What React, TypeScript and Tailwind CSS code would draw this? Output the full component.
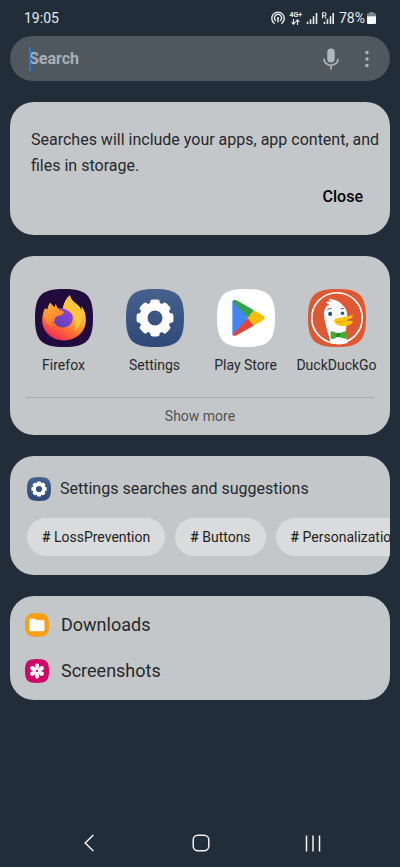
import type { ReactNode } from "react";

const apps = [
  { name: "Firefox", icon: <FirefoxIcon /> },
  { name: "Settings", icon: <SettingsIcon /> },
  { name: "Play Store", icon: <PlayStoreIcon /> },
  { name: "DuckDuckGo", icon: <DuckIcon /> },
];

const tags = ["LossPrevention", "Buttons", "Personalization"];

const folders = [
  { name: "Downloads", icon: <FolderIcon /> },
  { name: "Screenshots", icon: <GalleryIcon /> },
];

const cogAngles = [0, 45, 90, 135, 180, 225, 270, 315];
const petalAngles = [0, 60, 120, 180, 240, 300];

function Squircle({ fill, children }: { fill: string; children: ReactNode }) {
  return (
    <svg className="block h-full w-full" viewBox="0 0 170 170" aria-hidden="true">
      <path
        fill={fill}
        d="M0 85C0 19 19 0 85 0s85 19 85 85-19 85-85 85S0 151 0 85Z"
      />
      {children}
    </svg>
  );
}

function FirefoxIcon() {
  return (
    <Squircle fill="#210c3d">
      <defs>
        <linearGradient id="ffBody" x1="0.85" y1="0.1" x2="0.35" y2="1">
          <stop offset="0" stopColor="#ffdf4a" />
          <stop offset="0.4" stopColor="#ffb02e" />
          <stop offset="0.7" stopColor="#ff6f33" />
          <stop offset="1" stopColor="#f32a58" />
        </linearGradient>
        <linearGradient id="ffGlobe" x1="0.8" y1="0" x2="0.3" y2="1">
          <stop offset="0" stopColor="#9a45d8" />
          <stop offset="1" stopColor="#5a41bb" />
        </linearGradient>
        <linearGradient id="ffHead" x1="0.2" y1="0" x2="0.5" y2="1">
          <stop offset="0" stopColor="#ffb12e" />
          <stop offset="1" stopColor="#ff7434" />
        </linearGradient>
      </defs>
      <path
        fill="url(#ffBody)"
        d="M102 18C91 28 84 41 82 57L62 60 45 40C40 46 37 54 37 60L29 57C23 68 21 79 21 91c0 34 28 60 64 60s64-26 64-60c0-17-5-31-13-41 1 5 1 9 0 12C131 43 108 41 102 18Z"
      />
      <circle cx="82" cy="84" r="29" fill="url(#ffGlobe)" />
      <path
        fill="url(#ffHead)"
        d="M29 57l8 4c0-8 3-15 8-21 3 8 6 12 12 13l4-10c2 9 8 17 18 21 5 2 6 5 4 8-3 5-12 6-18 8-6 3-8 7-7 12-7 4-9 12-4 19-22-3-34-27-25-54Z"
      />
      <path
        fill="#ffc53a"
        d="M102 18c4 25 33 32 35 62 1 21-9 36-24 42 7-11 8-28 1-41-6-11-17-20-32-24 2-16 9-29 20-39Z"
      />
    </Squircle>
  );
}

function SettingsIcon() {
  return (
    <Squircle fill="url(#cogBg)">
      <defs>
        <linearGradient id="cogBg" x1="0" y1="0" x2="0" y2="1">
          <stop offset="0" stopColor="#46618c" />
          <stop offset="1" stopColor="#2f4a7a" />
        </linearGradient>
      </defs>
      <g fill="#fff">
        {cogAngles.map((a) => (
          <rect key={a} x="71" y="31" width="28" height="30" rx="7" transform={`rotate(${a} 85 85)`} />
        ))}
      </g>
      <circle cx="85" cy="85" r="34" fill="none" stroke="#fff" strokeWidth="24" />
    </Squircle>
  );
}

function PlayStoreIcon() {
  return (
    <Squircle fill="#fff">
      <path fill="#4285f4" d="M45 38v94c0 3 2 5 4 5l42-52-42-52c-2 0-4 2-4 5Z" />
      <path fill="#34a14f" d="M46 36c3-5 8-5 13-2l49 28-17 23Z" />
      <path fill="#ea4335" d="M46 133c3 5 8 5 13 2l49-28-17-22Z" />
      <path fill="#fbbc04" d="M108 62l26 15c7 4 7 11 0 15l-26 15-18-22Z" />
    </Squircle>
  );
}

function DuckIcon() {
  return (
    <Squircle fill="#de5833">
      <circle cx="85" cy="85" r="74" fill="none" stroke="#fff" strokeWidth="5" />
      <path
        fill="#fff"
        d="M66 157C59 128 50 104 47 80 45 62 52 50 63 45l-11-5c5-4 11-4 16-2l-8-9c18 0 33 7 41 18 12 9 15 24 14 40l-5 45 6 26c-17 6-34 6-50-1Z"
      />
      <path fill="#fdc60b" d="M77 90c7-8 28-4 50-13 6 0 5 6-1 9l-19 7c11 2 21-2 24 2 2 6-12 13-27 14-15 0-31-9-27-19Z" />
      <path fill="none" stroke="#e89a1c" strokeWidth="3" d="M84 95c9 3 20 2 30-3" />
      <path fill="#43ae2d" d="M67 124c8 0 14 4 20 7l24-8c3 7 3 16 2 23-9 0-18-4-24-6-7 3-14 7-20 7-3-7-4-16-2-23Z" />
      <rect x="83" y="128" width="12" height="13" rx="4" fill="#278a2b" />
      <circle cx="65" cy="73" r="6" fill="#2d4f8e" />
      <circle cx="101" cy="71" r="5" fill="#2d4f8e" />
      <path fill="none" stroke="#51659a" strokeWidth="3" d="M57 61q6-6 12-3M96 59q5-5 10-1" />
    </Squircle>
  );
}

function FolderIcon() {
  return (
    <Squircle fill="#f5a016">
      <path
        fill="#fff"
        d="M31 50q0-10 10-10h24q6 0 9 4l5 6h49q10 0 10 10v59q0 10-10 10H41q-10 0-10-10Z"
      />
      <path stroke="#f7c16a" strokeWidth="4" d="M80 50h54" />
    </Squircle>
  );
}

function GalleryIcon() {
  return (
    <Squircle fill="#cf0767">
      <g fill="#fff">
        {petalAngles.map((a) => (
          <path key={a} d="M80 74C66 56 66 31 85 31s19 25 5 43Z" transform={`rotate(${a} 85 85)`} />
        ))}
        <circle cx="85" cy="85" r="17" />
      </g>
      <circle cx="85" cy="85" r="8" fill="#cf0767" />
    </Squircle>
  );
}

function StatusBar() {
  return (
    <header className="flex h-9 items-center justify-between px-6 text-sm text-[#e6eaed]">
      <span>19:05</span>
      <div className="flex items-center gap-1">
        <svg className="h-[14px] w-[14px]" viewBox="0 0 14 14" fill="none" stroke="currentColor" strokeWidth="1.4" strokeLinecap="round">
          <path d="M3.2 12.2a6.2 6.2 0 1 1 7.6 0" />
          <path d="M4.6 9.6a3.6 3.6 0 1 1 4.8 0" />
          <circle cx="7" cy="7.2" r="1.1" fill="currentColor" stroke="none" />
          <path d="M7 8v3" />
        </svg>
        <div className="flex flex-col items-center">
          <span className="text-[7px] font-bold leading-[7px]">4G+</span>
          <svg className="h-[6px] w-[9px]" viewBox="0 0 9 6" fill="none" stroke="currentColor" strokeWidth="1.1">
            <path d="M2.5 0v5M.6 3.2l1.9 2 1.9-2M6.5 6V1M4.6 2.8l1.9-2 1.9 2" />
          </svg>
        </div>
        <svg className="h-3 w-3" viewBox="0 0 12 12" stroke="currentColor" strokeWidth="1.6">
          <path d="M1.5 12V9.8M4.5 12V7.2M7.5 12V4.2M10.5 12V1" />
        </svg>
        <svg className="h-3 w-3" viewBox="0 0 12 12" stroke="currentColor" strokeWidth="1.6" fill="none">
          <path d="M2.5 12V9.8M5.5 12V7.2M8.5 12V4.2M11.2 12V1" />
          <path strokeWidth="1.1" d="M.6 6.500V.7h2a1.500 1.500 0 0 1 0 3H.6M2.500 3.700 4.200 6.500" />
        </svg>
        <span className="ml-px">78%</span>
        <svg className="-ml-0.5 h-3 w-[9px]" viewBox="0 0 9 12">
          <path fill="#7b848b" d="M2.500 0h4v1.300H8q1 0 1 1V5H0V2.300q0-1 1-1h1.500Z" />
          <path fill="#f4f6f7" d="M0 4.300h9V11q0 1-1 1H1q-1 0-1-1Z" />
        </svg>
      </div>
    </header>
  );
}

function SearchBar() {
  return (
    <div className="relative flex h-[45px] items-center rounded-full bg-[#4f585f] pl-[19px] pr-[13px]">
      <input
        type="text"
        aria-label="Search"
        placeholder="Search"
        className="min-w-0 flex-1 bg-transparent text-base font-bold text-white outline-none placeholder:text-[#a8afb6]"
      />
      {/* text cursor */}
      <span className="absolute left-[19px] top-[11px] h-6 w-0.5 bg-[#1f7be0]"></span>
      <button type="button" aria-label="Voice search" className="mr-[14px] flex h-8 w-6 items-center justify-center text-[#b1b6ba]">
        <svg className="h-[22px] w-4" viewBox="0 0 16 22">
          <rect x="4.300" y="0.500" width="7.400" height="14" rx="3.700" fill="currentColor" />
          <path d="M.9 10.800a7.100 6.500 0 0 0 14.200 0M8 17.300v4.200" fill="none" stroke="currentColor" strokeWidth="1.700" />
        </svg>
      </button>
      <button type="button" aria-label="More options" className="flex h-8 w-5 items-center justify-center text-[#b1b6ba]">
        <svg className="h-[18px] w-1" viewBox="0 0 4 18" fill="currentColor">
          <circle cx="2" cy="2.500" r="1.700" />
          <circle cx="2" cy="9" r="1.700" />
          <circle cx="2" cy="15.500" r="1.700" />
        </svg>
      </button>
    </div>
  );
}

function Card({ className, children }: { className: string; children: ReactNode }) {
  return (
    <section className={`overflow-hidden rounded-3xl bg-[#c4c7c9] text-[#26292b] ${className}`}>
      {children}
    </section>
  );
}

export default function App() {
  return (
    <div className="flex min-h-screen flex-col bg-[#212e39] font-['Roboto',sans-serif]">
      <StatusBar />

      <main className="flex flex-col gap-[21px] px-[10px]">
        <SearchBar />

        <Card className="pb-[25px] pl-[21px] pr-1 pt-[25px]">
          <p className="text-base leading-[26px]">
            Searches will include your apps, app content, and files in storage.
          </p>
          <div className="flex justify-end pr-3 pt-[5px]">
            <button type="button" className="px-[11px] text-base font-medium leading-[26px] text-black">
              Close
            </button>
          </div>
        </Card>

        <Card className="pt-[33px]">
          <div className="grid grid-cols-4 px-2">
            {apps.map((app) => (
              <button key={app.name} type="button" className="flex flex-col items-center gap-2">
                <span className="h-[58px] w-[58px]">{app.icon}</span>
                <span className="whitespace-nowrap text-sm leading-5">{app.name}</span>
              </button>
            ))}
          </div>
          <div className="mx-4 mt-[22px] border-t border-[#a9adb0]">
            <button type="button" className="block w-full text-sm leading-[37px] text-[#505355]">
              Show more
            </button>
          </div>
        </Card>

        <Card className="pb-[19px] pt-[21px]">
          <div className="flex items-center gap-[9px] pl-[17px]">
            <span className="h-6 w-6">
              <SettingsIcon />
            </span>
            <h2 className="text-base leading-6">Settings searches and suggestions</h2>
          </div>
          <div className="mt-[17px] flex gap-[10px] overflow-x-auto pl-[17px] [scrollbar-width:none]">
            {tags.map((tag) => (
              <button
                key={tag}
                type="button"
                className="h-[38px] shrink-0 rounded-full bg-[#dadbdd] px-[15px] text-sm text-[#1d1f20]"
              >
                <span className="font-medium">#</span> {tag}
              </button>
            ))}
          </div>
        </Card>

        <Card className="py-[6px]">
          {folders.map((folder) => (
            <button key={folder.name} type="button" className="flex h-[46px] w-full items-center gap-3 pl-[15px] text-left text-lg">
              <span className="h-6 w-6">{folder.icon}</span>
              {folder.name}
            </button>
          ))}
        </Card>
      </main>

      <nav className="mt-auto flex h-12 justify-center pl-0.5 text-[#f0f3f5]">
        <button type="button" aria-label="Back" className="flex w-28 items-center justify-center">
          <svg className="h-[18px] w-[10px]" viewBox="0 0 10 18" fill="none" stroke="currentColor" strokeWidth="1.500">
            <path d="M9.300 1 1.200 9l8.100 8" />
          </svg>
        </button>
        <button type="button" aria-label="Home" className="flex w-28 items-center justify-center">
          <svg className="h-[18px] w-[18px]" viewBox="0 0 18 18" fill="none" stroke="currentColor" strokeWidth="1.500">
            <rect x="1.200" y="1.200" width="15.600" height="15.600" rx="4.800" />
          </svg>
        </button>
        <button type="button" aria-label="Recent apps" className="flex w-28 items-center justify-center">
          <svg className="h-[17px] w-4" viewBox="0 0 16 17" stroke="currentColor" strokeWidth="1.500">
            <path d="M1.500.5v16M8 .5v16M14.500.5v16" />
          </svg>
        </button>
      </nav>
    </div>
  );
}
